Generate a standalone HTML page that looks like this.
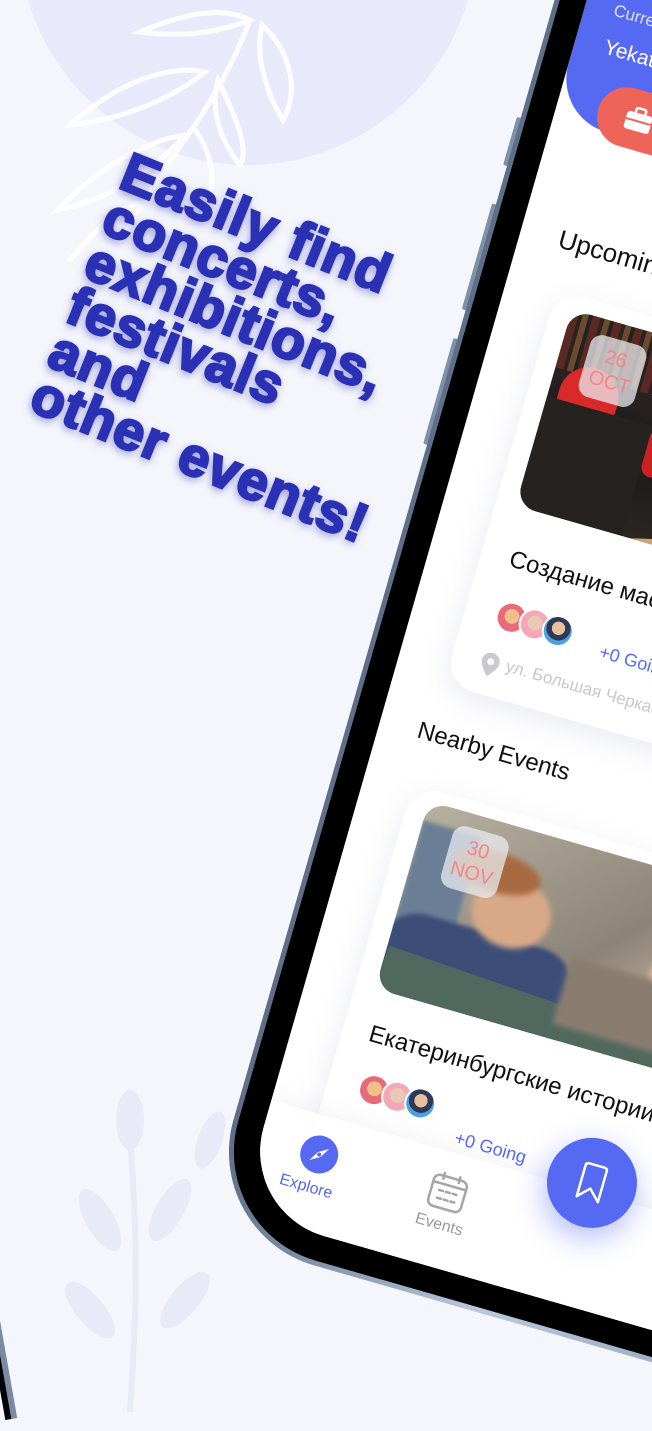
<!DOCTYPE html>
<html><head><meta charset="utf-8"><style>
*{margin:0;padding:0;box-sizing:border-box}
html,body{width:652px;height:1412px;overflow:hidden;background:#f5f6fb;font-family:"Liberation Sans","DejaVu Sans",sans-serif}
.abs{position:absolute}
.blob{position:absolute;left:18px;top:-300px;width:460px;height:465px;border-radius:50%;background:#e8eafb}
.head{position:absolute;left:133px;top:147px;transform-origin:0 0;transform:rotate(22deg);font-weight:bold;font-size:55px;line-height:48px;letter-spacing:1px;color:#2b31b5;-webkit-text-stroke:2.5px #2b31b5;text-shadow:0 3px 9px rgba(43,49,181,.6);white-space:nowrap}
.phone{position:absolute;left:201px;top:-267px;width:720px;height:1500px;transform-origin:0 1500px;transform:rotate(16deg)}
.frame{position:absolute;inset:0;border-radius:118px;background:linear-gradient(90deg,#5d6e86,#b9c8da 40%,#7d8ea8);}
.bezel{position:absolute;inset:5px;border-radius:113px;background:#000}
.screen{position:absolute;left:31px;top:31px;right:31px;bottom:31px;border-radius:88px;background:#fff;overflow:hidden}
.s{position:absolute}
.btn{position:absolute;border-radius:2px;background:#7f90aa}
</style></head><body>
<div class="blob"></div>
<svg class="abs" style="left:0;top:0" width="420" height="420" viewBox="0 0 420 420" fill="none" stroke="#fff" stroke-width="5" stroke-linecap="round" opacity=".95">
<path d="M250 20 C235 60 215 95 195 125 C170 160 150 190 120 240"/>
<path d="M250 20 C220 5 180 15 140 32 C185 38 220 32 250 20Z"/>
<path d="M262 25 C290 50 300 90 283 120 C265 90 255 55 262 25Z"/>
<path d="M205 72 C170 65 120 80 70 125 C120 120 170 100 205 72Z"/>
<path d="M218 80 C235 115 250 150 240 165 C220 140 210 110 218 80Z"/>
<path d="M185 135 C150 140 100 165 58 210 C105 200 150 175 185 135Z"/>
<path d="M195 130 C210 150 215 175 210 195"/>
<path d="M150 200 C120 205 95 230 70 260"/>
</svg>
<svg class="abs" style="left:60px;top:1080px" width="200" height="332" viewBox="0 0 200 332" fill="#e8eaf8">
<path d="M70 332 C75 250 80 180 70 60" stroke="#e8eaf8" stroke-width="6" fill="none"/>
<ellipse cx="70" cy="40" rx="14" ry="30"/>
<ellipse cx="40" cy="140" rx="14" ry="35" transform="rotate(-30 40 140)"/>
<ellipse cx="110" cy="130" rx="14" ry="35" transform="rotate(30 110 130)"/>
<ellipse cx="30" cy="230" rx="14" ry="35" transform="rotate(-40 30 230)"/>
<ellipse cx="125" cy="220" rx="14" ry="35" transform="rotate(40 125 220)"/>
<ellipse cx="150" cy="60" rx="12" ry="30" transform="rotate(20 150 60)"/>
</svg>
<div class="abs" style="left:-6px;top:1290px;width:12px;height:130px;background:#7a8aa3;border-left:6px solid #000;transform:rotate(-10deg)"></div>
<div class="head">Easily find<br>concerts,<br>exhibitions,<br>festivals<br>and<br>other events!</div>

<div class="phone">
 <div class="btn" style="left:-4px;top:430px;width:6px;height:110px"></div>
 <div class="btn" style="left:-4px;top:570px;width:6px;height:110px"></div>
 <div class="btn" style="left:-4px;top:340px;width:6px;height:50px"></div>
 <div class="frame"></div>
 <div class="bezel"></div>
 <div class="screen">
  <div class="s" style="left:0;top:0;width:700px;height:299px;background:#5669f2;border-bottom-left-radius:55px"></div>
  <div class="s" style="left:29px;top:170px;color:rgba(255,255,255,.8);font-size:17px">Current Location ▾</div>
  <div class="s" style="left:30px;top:206px;color:#fff;font-size:21px">Yekaterinburg</div>
  <div class="s" style="left:41px;top:249px;width:300px;height:60px;border-radius:30px;background:#ee6458"></div>
  <svg class="s" style="left:68px;top:264px" width="30" height="28" viewBox="0 0 30 28"><rect x="2" y="8" width="26" height="18" rx="3" fill="#fff"/><rect x="10" y="3" width="10" height="7" rx="2" fill="none" stroke="#fff" stroke-width="2.5"/><rect x="2" y="15" width="26" height="2" fill="#ee6458"/></svg>
  <div class="s" style="left:39px;top:399px;font-size:26px;color:#111">Upcoming Events</div>
  <div class="s" style="left:51px;top:464px;width:600px;height:410px;border-radius:30px;background:#fff;box-shadow:0 8px 30px rgba(80,90,140,.12)"></div>
  <div class="s" style="left:71px;top:479px;width:560px;height:204px;border-radius:20px;overflow:hidden;background:linear-gradient(180deg,#3a2a26 0%,#2a2222 30%,#1a1a1a 60%,#2c2622 100%)">
   <div class="s" style="left:0;top:0;width:100%;height:60px;background:repeating-linear-gradient(90deg,#5a2a22 0 8px,#2b2320 8px 12px,#6b4a30 12px 18px,#222 18px 22px)"></div>
   <div class="s" style="left:10px;top:50px;width:60px;height:45px;border-radius:30px 30px 8px 8px;background:#d92a2a"></div>
   <div class="s" style="left:-10px;top:90px;width:120px;height:114px;background:#26221f"></div>
   <div class="s" style="left:90px;top:150px;width:500px;height:80px;background:#c9a475;transform:rotate(-14deg)"></div>
   <div class="s" style="left:110px;top:90px;width:60px;height:50px;background:#c82222;border-radius:10px"></div>
  </div>
  <div class="s" style="left:98px;top:495px;width:58px;height:64px;border-radius:12px;background:rgba(235,235,240,.75);color:#e88;font-size:20px;line-height:24px;text-align:center;padding-top:8px">26<br>OCT</div>
  <div class="s" style="left:80px;top:722px;font-size:24px;color:#111;white-space:nowrap">Создание мастерской</div>
  <div class="s" style="left:82px;top:776px;width:32px;height:32px;border-radius:50%;background:radial-gradient(circle at 50% 45%,#f0c08a 0 35%,#e86b7a 36%);border:2px solid #fff"></div>
  <div class="s" style="left:106px;top:776px;width:32px;height:32px;border-radius:50%;background:radial-gradient(circle at 50% 45%,#e8c9b5 0 35%,#f3a8b8 36%);border:2px solid #fff"></div>
  <div class="s" style="left:130px;top:776px;width:32px;height:32px;border-radius:50%;background:radial-gradient(circle at 50% 40%,#e8c0a0 0 30%,#2c3a56 31% 55%,#4aa0e0 56%);border:2px solid #fff"></div>
  <div class="s" style="left:192px;top:790px;font-size:18px;color:#5669ff">+0 Going</div>
  <svg class="s" style="left:80px;top:830px" width="20" height="26" viewBox="0 0 20 26"><path d="M10 1C5 1 1 5 1 10c0 6 9 15 9 15s9-9 9-15c0-5-4-9-9-9z" fill="#c9c9cf"/><circle cx="10" cy="10" r="3.5" fill="#fff"/></svg>
  <div class="s" style="left:106px;top:830px;font-size:17px;color:#c8c8cc;white-space:nowrap">ул. Большая Черкасская</div>
  <div class="s" style="left:39px;top:912px;font-size:24px;color:#111">Nearby Events</div>
  <div class="s" style="left:49px;top:979px;width:600px;height:460px;border-radius:30px;background:#fff;box-shadow:0 8px 30px rgba(80,90,140,.12)"></div>
  <div class="s" style="left:69px;top:991px;width:560px;height:195px;border-radius:20px;overflow:hidden;background:linear-gradient(135deg,#b8b0a0 0%,#8c8478 40%,#c9b6a0 60%,#5a6a7a 100%)">
   <div class="s" style="left:0;top:20px;width:60px;height:110px;background:#6a7f96;filter:blur(2px)"></div>
   <div class="s" style="left:-10px;top:110px;width:200px;height:100px;background:#3c4e78;border-radius:40px 40px 0 0;filter:blur(2px)"></div>
   <div class="s" style="left:70px;top:50px;width:80px;height:70px;border-radius:50%;background:#d9a887;filter:blur(3px)"></div>
   <div class="s" style="left:40px;top:30px;width:90px;height:40px;border-radius:50%;background:#a86a40;filter:blur(3px)"></div>
   <div class="s" style="left:0;top:165px;width:580px;height:50px;background:#50685e;transform:rotate(3deg)"></div>
   <div class="s" style="left:260px;top:70px;width:80px;height:70px;border-radius:50%;background:#e2b89a;filter:blur(3px)"></div>
   <div class="s" style="left:180px;top:110px;width:120px;height:70px;background:#8a7d70;filter:blur(3px)"></div>
  </div>
  <div class="s" style="left:101px;top:1005px;width:58px;height:64px;border-radius:12px;background:rgba(235,235,240,.75);color:#e88;font-size:20px;line-height:24px;text-align:center;padding-top:8px">30<br>NOV</div>
  <div class="s" style="left:76px;top:1217px;font-size:24px;color:#111;white-space:nowrap">Екатеринбургские истории</div>
  <div class="s" style="left:80px;top:1268px;width:32px;height:32px;border-radius:50%;background:radial-gradient(circle at 50% 45%,#f0c08a 0 35%,#e86b7a 36%);border:2px solid #fff"></div>
  <div class="s" style="left:104px;top:1268px;width:32px;height:32px;border-radius:50%;background:radial-gradient(circle at 50% 45%,#e8c9b5 0 35%,#f3a8b8 36%);border:2px solid #fff"></div>
  <div class="s" style="left:128px;top:1268px;width:32px;height:32px;border-radius:50%;background:radial-gradient(circle at 50% 40%,#e8c0a0 0 30%,#2c3a56 31% 55%,#4aa0e0 56%);border:2px solid #fff"></div>
  <div class="s" style="left:187px;top:1297px;font-size:18px;color:#5669ff">+0 Going</div>
  <div class="s" style="left:0;top:1322px;width:700px;height:200px;background:linear-gradient(180deg,rgba(255,255,255,.85),#fff 30px);box-shadow:0 -6px 20px rgba(80,90,140,.06)"></div>
  <div class="s" style="left:42px;top:1342px;width:38px;height:38px;border-radius:50%;background:#5669f2"></div>
  <svg class="s" style="left:42px;top:1342px" width="38" height="38" viewBox="0 0 38 38"><path d="M27 11 L21 21 L11 27 L17 17Z" fill="#fff"/><circle cx="19" cy="19" r="2" fill="#5669f2"/></svg>
  <div class="s" style="left:30px;top:1387px;font-size:16px;color:#5669f2">Explore</div>
  <svg class="s" style="left:175px;top:1340px" width="40" height="42" viewBox="0 0 40 42" fill="none" stroke="#a5a5a5" stroke-width="2.5"><rect x="3" y="7" width="34" height="32" rx="6"/><path d="M3 15h34M12 3v8M28 3v8"/><path d="M11 22h4M18 22h4M25 22h4M11 30h4M18 30h4M25 30h4" stroke-linecap="round"/></svg>
  <div class="s" style="left:171px;top:1387px;font-size:16px;color:#9a9a9a">Events</div>
  <div class="s" style="left:286px;top:1268px;width:90px;height:90px;border-radius:50%;background:#5669f2;box-shadow:0 10px 30px rgba(86,105,242,.45)"></div>
  <svg class="s" style="left:311px;top:1292px" width="40" height="42" viewBox="0 0 40 42" fill="none" stroke="#fff" stroke-width="2.5" stroke-linejoin="round"><path d="M9 6 Q9 3 12 3 H28 Q31 3 31 6 V38 L20 27 L9 38Z"/></svg>
 </div>
</div>
</body></html>
